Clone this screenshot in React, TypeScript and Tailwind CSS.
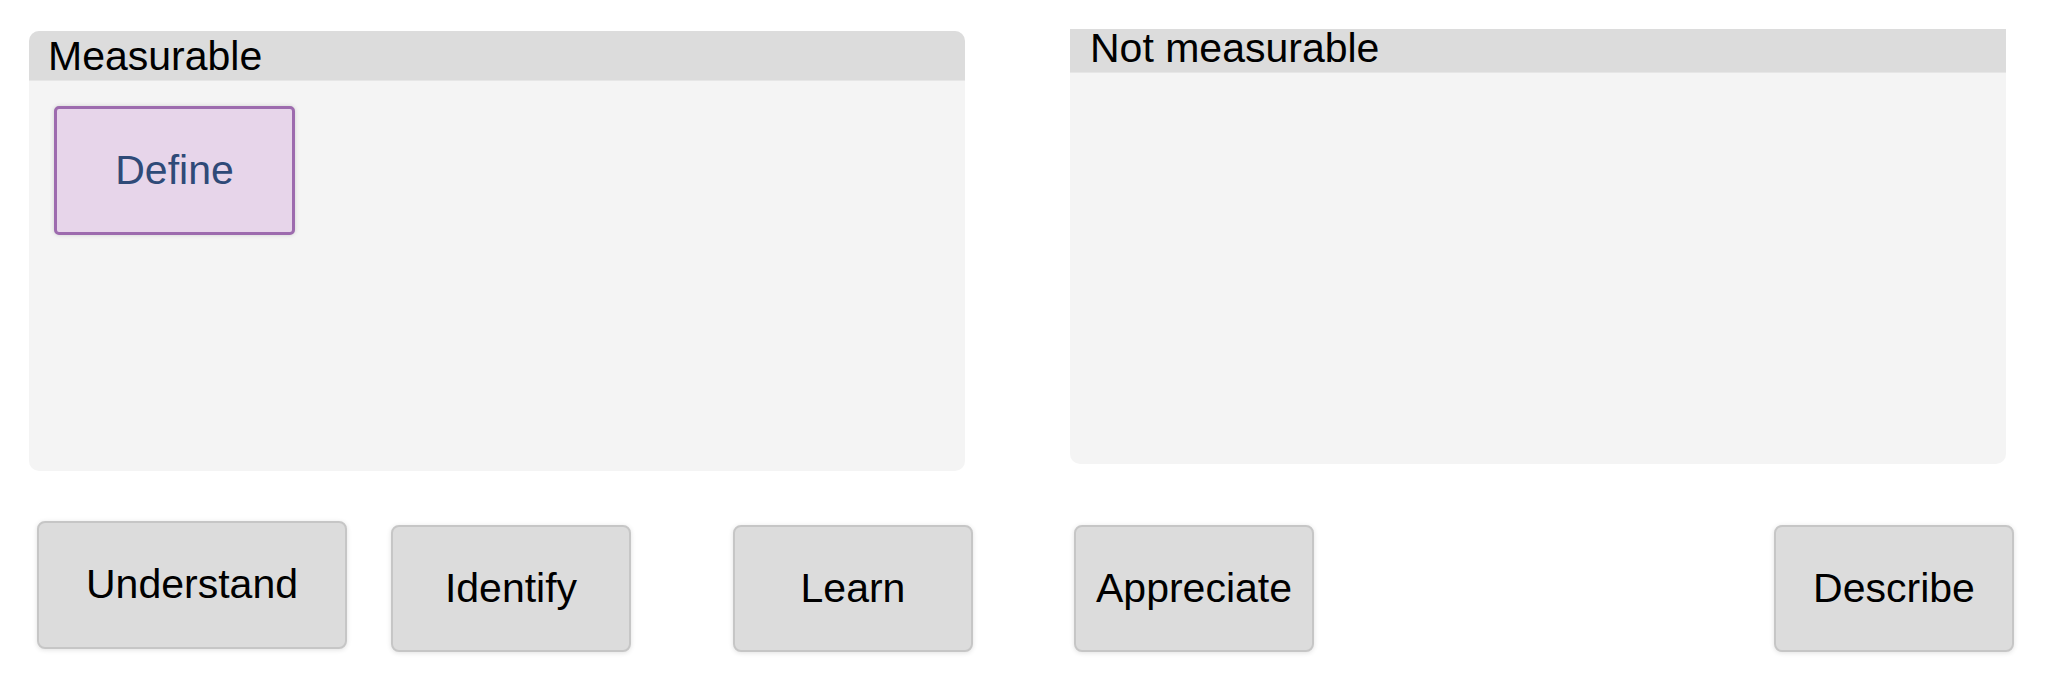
import React from 'react';

const CHOICES = [
  { label: 'Understand', className: 'ml-[37px] mt-0 w-[310px] h-[128px]' },
  { label: 'Identify', className: 'ml-[44px] mt-[4px] w-[240px] h-[127px]' },
  { label: 'Learn', className: 'ml-[102px] mt-[4px] w-[240px] h-[127px]' },
  { label: 'Appreciate', className: 'ml-[101px] mt-[4px] w-[240px] h-[127px]' },
  { label: 'Describe', className: 'ml-[460px] mt-[4px] w-[240px] h-[127px]' },
];

const Choice: React.FC<{ label: string; className: string }> = ({ label, className }) => (
  <div
    className={`${className} shrink-0 flex items-center justify-center rounded-[8px] border-2 border-[#c6c6c6] bg-[#dcdcdc] text-black text-[41px] shadow-[0_1px_5px_rgba(0,0,0,0.12)]`}
  >
    {label}
  </div>
);

export default function App() {
  return (
    <div className="w-full h-[696px] bg-white font-['Liberation_Sans',Arial,sans-serif] overflow-hidden">
      {/* Drop zones */}
      <div className="flex items-start">
        <div className="ml-[29px] mt-[31px] w-[936px] h-[440px] shrink-0 rounded-[10px] overflow-hidden bg-[#f4f4f4]">
          <div className="h-[50px] bg-[#dcdcdc] border-b border-[#e6e6e6] pl-[19px] text-[41px] leading-[50px] text-black">
            Measurable
          </div>
          <div className="pl-[25px] pt-[25px]">
            <div className="w-[241px] h-[129px] flex items-center justify-center rounded-[5px] border-[3px] border-[#9d6bae] bg-[#e7d5ea] text-[#2f4a78] text-[41px] shadow-[0_0_4px_rgba(0,0,0,0.15)]">
              Define
            </div>
          </div>
        </div>

        <div className="ml-[105px] mt-[29px] w-[936px] h-[435px] shrink-0 flex flex-col rounded-b-[10px] bg-[#f4f4f4]">
          <div className="h-[44px] shrink-0 flex items-center bg-[#dcdcdc] border-b border-[#e6e6e6] pl-[20px] pb-[6px] text-[41px] leading-[38px] text-black">
            Not measurable
          </div>
        </div>
      </div>

      {/* Items to sort */}
      <div className="mt-[50px] flex items-start">
        {CHOICES.map((c) => (
          <Choice key={c.label} label={c.label} className={c.className} />
        ))}
      </div>
    </div>
  );
}
